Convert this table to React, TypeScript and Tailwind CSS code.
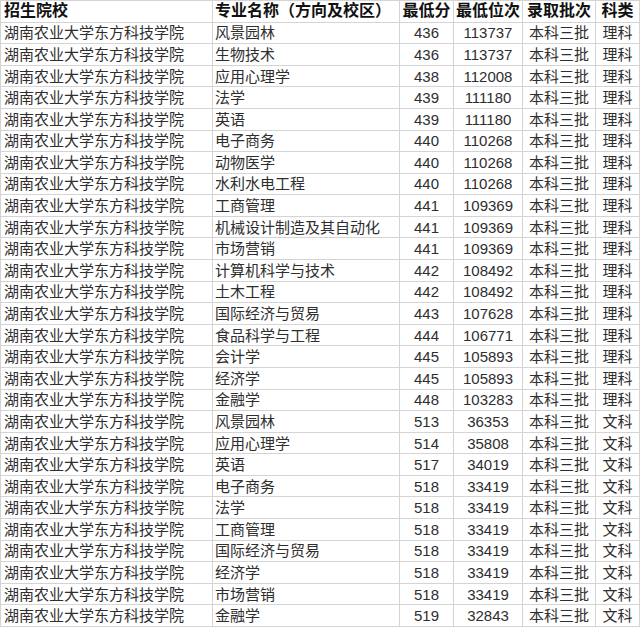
import React from "react";

const rows: [string, string, string, string][] = [
  ["风景园林", "436", "113737", "理科"],
  ["生物技术", "436", "113737", "理科"],
  ["应用心理学", "438", "112008", "理科"],
  ["法学", "439", "111180", "理科"],
  ["英语", "439", "111180", "理科"],
  ["电子商务", "440", "110268", "理科"],
  ["动物医学", "440", "110268", "理科"],
  ["水利水电工程", "440", "110268", "理科"],
  ["工商管理", "441", "109369", "理科"],
  ["机械设计制造及其自动化", "441", "109369", "理科"],
  ["市场营销", "441", "109369", "理科"],
  ["计算机科学与技术", "442", "108492", "理科"],
  ["土木工程", "442", "108492", "理科"],
  ["国际经济与贸易", "443", "107628", "理科"],
  ["食品科学与工程", "444", "106771", "理科"],
  ["会计学", "445", "105893", "理科"],
  ["经济学", "445", "105893", "理科"],
  ["金融学", "448", "103283", "理科"],
  ["风景园林", "513", "36353", "文科"],
  ["应用心理学", "514", "35808", "文科"],
  ["英语", "517", "34019", "文科"],
  ["电子商务", "518", "33419", "文科"],
  ["法学", "518", "33419", "文科"],
  ["工商管理", "518", "33419", "文科"],
  ["国际经济与贸易", "518", "33419", "文科"],
  ["经济学", "518", "33419", "文科"],
  ["市场营销", "518", "33419", "文科"],
  ["金融学", "519", "32843", "文科"],
];

const font = { fontFamily: '"Liberation Sans", "Noto Sans CJK SC", sans-serif' };

export default function App() {
  const cell = "bg-white flex items-center overflow-hidden whitespace-nowrap leading-none";
  const head = `${cell} font-bold text-[16px] text-[#111]`;
  const data = `${cell} text-[15px] text-[#2e2e2e]`;
  return (
    <div
      className="w-[640px] h-[627px] bg-[#d4d4d4] p-px grid gap-px grid-cols-[211px_186px_53px_68px_72px_1fr] grid-rows-[repeat(29,minmax(0,1fr))]"
      style={font}
    >
      <div className={`${head} pl-[3px]`}>招生院校</div>
      <div className={`${head} pl-[2px]`}>专业名称（方向及校区）</div>
      <div className={`${head} justify-center`}>最低分</div>
      <div className={`${head} justify-center`}>最低位次</div>
      <div className={`${head} justify-center`}>录取批次</div>
      <div className={`${head} justify-center`}>科类</div>
      {rows.map((r, i) => (
        <React.Fragment key={i}>
          <div className={`${data} pl-[3px]`}>湖南农业大学东方科技学院</div>
          <div className={`${data} pl-[2px]`}>{r[0]}</div>
          <div className={`${data} justify-center text-[14px]`}>{r[1]}</div>
          <div className={`${data} justify-center text-[14px]`}>{r[2]}</div>
          <div className={`${data} justify-center`}>本科三批</div>
          <div className={`${data} justify-center`}>{r[3]}</div>
        </React.Fragment>
      ))}
    </div>
  );
}
